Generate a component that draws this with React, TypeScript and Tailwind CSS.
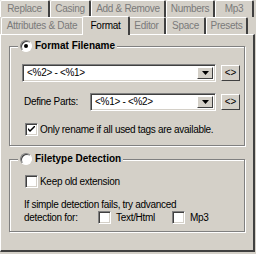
import type { ReactNode } from 'react';

const font = { fontFamily: '"Liberation Sans", Arial, sans-serif' };

// raised 3D edge used by tabs/buttons
const raised =
  'border-t border-l border-t-white border-l-white border-r border-b border-r-[#404040] border-b-[#404040]';

function Tab({ label, w, active = false }: { label: string; w: string; active?: boolean }) {
  return (
    <div
      className={`${w} flex items-center justify-center bg-[#d4d0c8] border-t border-l border-t-white border-l-white rounded-t-[2px] border-r-2 border-r-[#404040] ${
        active ? 'h-[19px] -mx-[2px] -mb-px relative z-10 text-black' : 'h-[17px] text-[#7a7a7a]'
      }`}>
      {label}
    </div>
  );
}

function Radio({ checked }: { checked: boolean }) {
  return (
    <div className="w-3 h-3 rounded-full bg-white border border-t-[#808080] border-l-[#808080] border-r-white border-b-white flex items-center justify-center shadow-[inset_1px_1px_0_#404040]">
      {checked && <div className="w-1 h-1 rounded-full bg-black" />}
    </div>
  );
}

function Check({ checked = false }: { checked?: boolean }) {
  return (
    <div className="w-[13px] h-[13px] bg-white border border-t-[#808080] border-l-[#808080] border-r-white border-b-white shadow-[inset_1px_1px_0_#404040,inset_-1px_-1px_0_#d4d0c8] flex items-center justify-center">
      {checked && (
        <svg width="7" height="7" viewBox="0 0 7 7">
          <path d="M0 2 L0 4 L2 6 L7 1 L7 -1 L2 4 Z" fill="#000" />
        </svg>
      )}
    </div>
  );
}

function Combo({ value, w }: { value: string; w: string }) {
  return (
    <div className={`${w} h-[18px] flex bg-white border border-t-[#808080] border-l-[#808080] border-r-white border-b-white shadow-[inset_1px_1px_0_#404040,inset_-1px_-1px_0_#d4d0c8] p-[2px]`}>
      <div className="flex-1 pl-[2px] leading-[12px] text-black">{value}</div>
      <div className={`w-4 h-[12px] bg-[#d4d0c8] ${raised} flex items-center justify-center`}>
        <svg width="7" height="4" viewBox="0 0 7 4">
          <path d="M0 0 H7 L3.5 4 Z" fill="#000" />
        </svg>
      </div>
    </div>
  );
}

function SmallBtn() {
  return (
    <div className={`w-[19px] h-[16px] bg-[#d4d0c8] ${raised} flex items-center justify-center text-black text-[10px] leading-none tracking-normal`}>
      &lt;&gt;
    </div>
  );
}

function Group({ title, children, h }: { title: string; children: ReactNode; h: string }) {
  return (
    <div className={`relative mx-[8px] ${h} border border-[#808080] shadow-[inset_1px_1px_0_#fff,1px_1px_0_#fff]`}>
      <div className="absolute -top-[7px] left-[8px] flex items-center gap-[3px] bg-[#d4d0c8] px-[2px] text-black">
        <Radio checked={title === 'Format Filename'} />
        <span className="font-bold text-[10px] tracking-normal">{title}</span>
      </div>
      {children}
    </div>
  );
}

export default function App() {
  return (
    <div className="w-[256px] h-[254px] bg-[#d4d0c8] text-[10px] leading-[12px] tracking-[-0.3px] overflow-hidden" style={font}>
      <div className="flex">
        <Tab label="Replace" w="w-[50px]" />
        <Tab label="Casing" w="w-[41px]" />
        <Tab label="Add & Remove" w="w-[75px]" />
        <Tab label="Numbers" w="w-[49px]" />
        <Tab label="Mp3" w="w-[39px]" />
      </div>
      <div className="flex pl-px items-end h-[17px]">
        <Tab label="Attributes & Date" w="w-[83px]" />
        <Tab label="Format" w="w-[48px]" active />
        <Tab label="Editor" w="w-[38px]" />
        <Tab label="Space" w="w-[40px]" />
        <Tab label="Presets" w="w-[42px]" />
      </div>
      <div className="h-[218px] w-[255px] border-t border-l border-t-white border-l-white border-r-2 border-b-2 border-r-[#404040] border-b-[#404040] pt-[11px]">
        <Group title="Format Filename" h="h-[100px]">
          <div className="flex items-center gap-[5px] pl-[12px] pt-[17px]">
            <Combo value="<%2> - <%1>" w="w-[194px]" />
            <SmallBtn />
          </div>
          <div className="flex items-center gap-[5px] pl-[14px] pt-[11px]">
            <span className="text-black w-[61px]">Define Parts:</span>
            <Combo value="<%1> - <%2>" w="w-[126px]" />
            <SmallBtn />
          </div>
          <div className="flex items-center gap-[2px] pl-[15px] pt-[12px] text-black">
            <Check checked />
            <span>Only rename if all used tags are available.</span>
          </div>
        </Group>
        <div className="h-[13px]" />
        <Group title="Filetype Detection" h="h-[73px]">
          <div className="flex items-center gap-[2px] pl-[15px] pt-[15px] text-black">
            <Check />
            <span>Keep old extension</span>
          </div>
          <div className="pl-[14px] pt-[11px] text-black">If simple detection fails, try advanced</div>
          <div className="flex items-center pl-[14px] text-black">
            <span className="w-[74px]">detection for:</span>
            <Check />
            <span className="ml-[5px] w-[56px]">Text/Html</span>
            <Check />
            <span className="ml-[5px]">Mp3</span>
          </div>
        </Group>
      </div>
    </div>
  );
}
